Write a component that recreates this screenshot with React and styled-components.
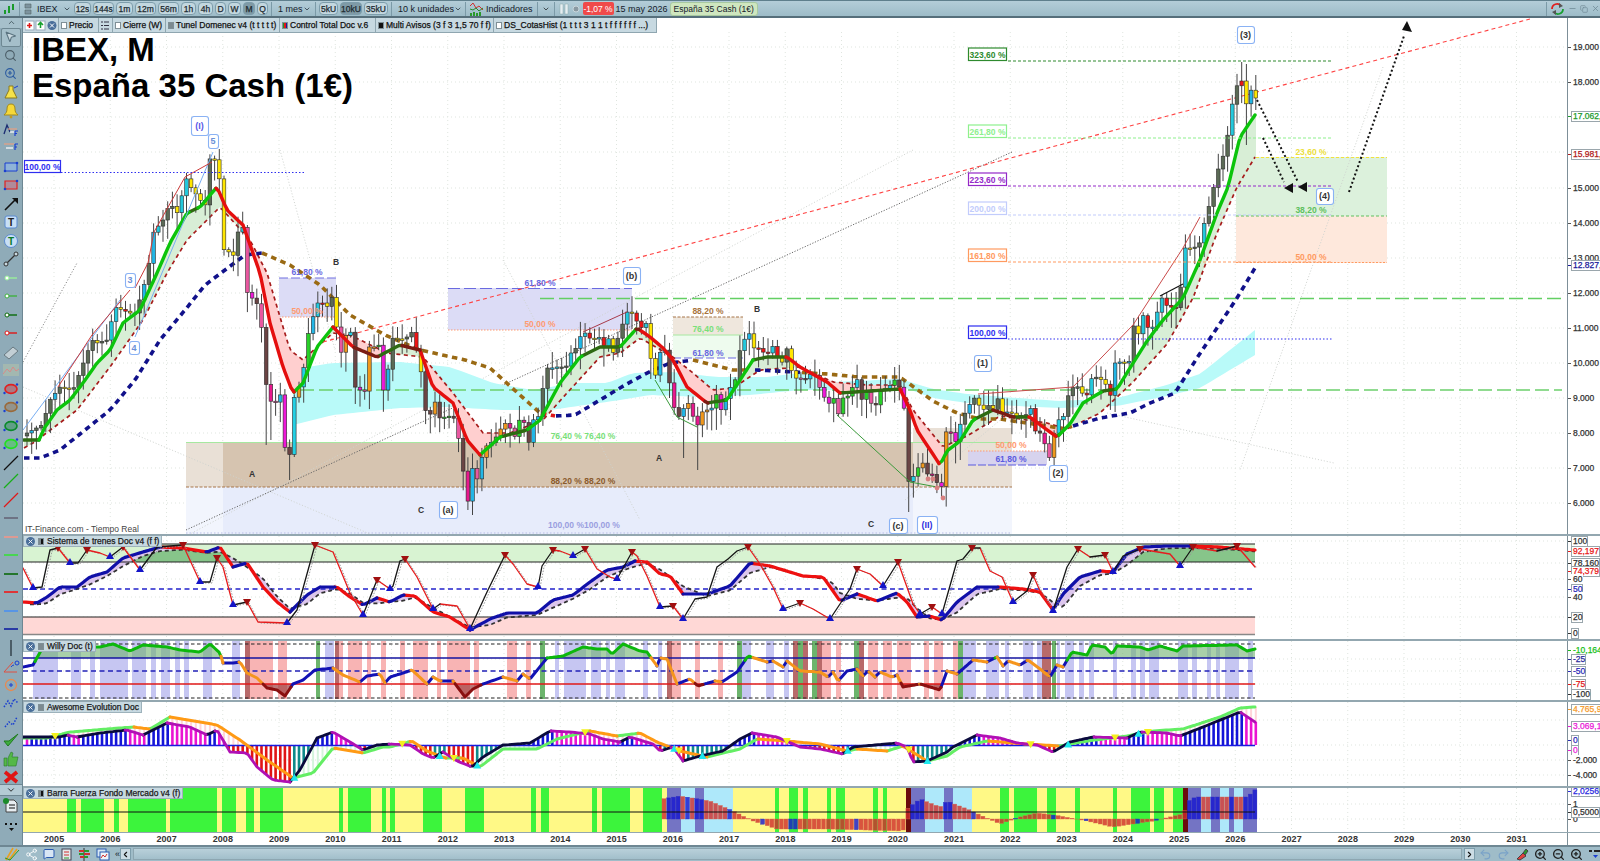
import React from 'react'
import styled, { createGlobalStyle } from 'styled-components'
import { MousePointer2, Search, ZoomIn, ZoomOut, Share2, MessageSquare, Undo2, Redo2, ChevronDown, ChevronUp, ChevronLeft, ChevronRight, Minus, X, Copy } from 'lucide-react'

const GlobalStyle = createGlobalStyle`
  html, body { margin: 0; padding: 0; background: #fff; }
  body { font-family: "Liberation Sans", Arial, sans-serif; }
`

// ---- data, read off the chart in page pixels (x, y) ----
const pairs = (a) => {
  const out = []
  for (let i = 0; i < a.length; i += 2) out.push([a[i], a[i + 1]])
  return out
}
const interp = (pts, x) => {
  if (x <= pts[0][0]) return pts[0][1]
  for (let i = 1; i < pts.length; i++) {
    if (x <= pts[i][0]) {
      const [x0, y0] = pts[i - 1]
      const [x1, y1] = pts[i]
      return y0 + ((y1 - y0) * (x - x0)) / (x1 - x0 || 1)
    }
  }
  return pts[pts.length - 1][1]
}
const rnd = (i) => {
  const s = Math.sin(i * 127.1 + 11.7) * 43758.5453
  return s - Math.floor(s)
}

const CLOSE = pairs([27,433,42,425,50,400,60,387,73,390,78,377,92,340,97,343,107,340,115,307,130,313,135,313,143,290,149,263,153,233,163,220,170,203,177,213,187,177,192,190,197,195,205,207,210,158,215,160,220,182,224,250,229,252,233,257,238,232,243,227,247,292,252,298,257,304,262,330,267,395,272,403,276,402,280,392,285,448,290,455,294,398,299,387,303,373,308,335,313,317,317,303,323,303,328,307,332,297,337,330,341,353,346,335,351,332,355,387,360,390,364,398,369,347,374,347,378,337,383,392,388,370,393,337,400,340,407,337,412,332,417,352,422,377,425,410,430,415,435,402,439,418,445,417,450,416,453,415,458,435,463,470,468,502,472,467,477,480,482,457,487,445,492,442,496,437,500,430,505,423,510,428,515,437,519,420,524,422,529,443,533,420,538,418,542,393,547,368,552,368,557,367,566,367,571,353,576,348,580,337,585,333,589,338,594,339,599,337,603,348,608,337,613,353,623,323,627,312,632,313,636,320,641,328,646,323,650,355,655,378,659,353,665,350,669,380,674,407,678,418,683,410,687,400,697,427,702,412,707,410,712,408,717,393,721,410,726,398,730,388,735,381,740,350,744,340,749,333,754,348,758,348,763,352,768,353,773,346,777,357,783,363,787,348,791,370,796,378,807,379,813,370,818,384,828,405,833,396,838,415,843,398,848,396,857,379,861,401,866,391,871,403,875,408,880,391,889,387,894,379,899,387,903,389,908,482,913,477,918,468,922,461,927,474,932,474,936,482,942,487,946,432,950,430,955,444,960,425,964,415,969,406,973,396,979,405,983,410,988,405,993,410,997,396,1002,413,1007,412,1011,412,1016,418,1020,415,1025,417,1030,405,1035,431,1039,431,1044,441,1049,460,1053,437,1058,420,1063,419,1067,398,1073,387,1077,386,1082,393,1087,395,1091,379,1096,377,1100,379,1105,382,1110,398,1115,363,1119,362,1124,362,1129,363,1133,324,1138,336,1143,315,1147,327,1152,329,1157,313,1162,298,1166,305,1171,307,1176,308,1181,286,1185,248,1193,248,1199,245,1204,224,1208,210,1213,190,1217,172,1222,160,1227,140,1231,110,1236,88,1241,77,1246,105,1251,90,1255,98])

const FAST = pairs([24,440,40,440,43,430,57,410,70,400,83,383,97,363,110,350,123,323,140,310,157,273,170,243,187,213,200,207,217,187,227,210,243,225,260,273,270,323,283,367,293,393,303,383,317,347,333,327,353,347,377,357,400,345,420,350,433,387,453,403,467,440,480,455,500,437,527,430,540,420,560,383,580,357,600,347,620,347,637,328,650,337,663,348,673,360,687,387,707,403,727,400,740,380,753,360,767,357,787,357,800,367,827,382,840,393,900,389,910,410,917,430,940,465,947,451,960,441,973,420,993,410,1013,417,1030,417,1043,427,1057,437,1070,424,1083,403,1103,391,1117,389,1130,368,1147,341,1163,320,1183,298,1200,260,1217,213,1228,187,1240,137,1255,115])
const SLOW = pairs([24,448,33,443,77,410,110,367,143,320,167,273,187,240,220,207,250,240,267,273,280,317,290,350,303,360,317,347,333,333,350,335,387,353,423,357,453,393,483,433,510,433,543,420,567,393,600,357,620,353,640,338,673,357,693,373,713,390,733,388,760,370,800,367,833,382,867,385,900,385,913,410,943,447,967,436,1000,416,1047,423,1067,429,1100,413,1133,382,1167,344,1193,298,1217,233,1237,187,1255,157])
const LONG = pairs([24,458,40,458,60,450,85,430,110,410,135,380,160,340,185,310,205,285,225,270,245,255,262,253,290,265,320,285,350,315,385,335,420,350,465,360,490,368,520,395,540,413,555,416,575,415,600,400,625,385,647,373,670,363,693,360,733,370,757,370,777,371,827,374,860,377,900,377,933,401,957,413,980,419,1000,419,1047,426,1065,429,1073,426,1100,418,1130,413,1150,403,1175,393,1197,358,1237,298,1255,268])
const CLOUD_TOP = pairs([293,372,307,367,333,363,400,362,450,367,493,383,533,390,573,383,607,383,633,373,673,372,717,377,767,377,800,373,833,382,900,379,933,389,967,394,1017,398,1060,401,1117,398,1167,385,1200,374,1255,330])
const CLOUD_BOTTOM = pairs([293,425,333,415,400,408,450,407,500,410,550,410,607,402,650,395,700,397,750,395,800,390,833,390,900,386,933,398,967,403,1017,406,1060,408,1117,406,1167,396,1200,388,1255,355])

const TRAIN_SLOW = pairs([23,602,37,603,47,597,60,587,77,587,90,577,107,572,123,558,143,552,160,547,183,548,207,552,220,547,233,567,247,563,263,587,277,602,290,612,307,595,320,587,337,587,350,597,363,605,377,598,390,602,403,595,415,596,433,612,450,617,470,630,490,619,507,613,537,613,553,600,573,595,590,582,607,570,623,567,635,561,647,562,660,574,670,576,683,594,707,594,730,586,750,563,770,566,803,576,823,577,833,591,840,601,857,594,877,601,897,593,907,602,917,617,930,616,942,620,957,602,977,587,1000,587,1023,589,1040,592,1053,610,1063,594,1080,577,1100,571,1113,572,1127,554,1143,547,1167,546,1190,546,1220,547,1255,550])
const TRAIN_FAST = pairs([23,568,33,588,42,587,50,550,58,548,70,563,78,563,87,550,100,553,110,557,123,547,140,570,157,547,183,545,200,582,210,582,217,558,223,567,233,605,247,602,258,622,287,623,297,610,315,545,333,552,350,593,363,615,377,580,390,589,393,586,400,561,405,559,417,577,433,609,440,604,457,606,470,629,487,592,505,555,513,564,527,584,538,587,542,566,553,550,560,551,573,556,585,549,597,569,610,577,617,579,632,552,637,556,647,576,660,607,673,606,683,619,695,599,707,597,717,567,728,559,737,551,748,547,760,564,773,587,783,609,800,603,813,609,830,619,850,589,857,569,870,574,883,586,898,562,913,604,920,614,932,607,942,614,957,561,963,559,972,548,980,548,990,571,1002,577,1013,602,1027,591,1033,575,1040,591,1053,611,1067,567,1078,549,1090,557,1105,555,1113,572,1123,556,1140,549,1170,554,1180,566,1193,547,1217,551,1237,546,1255,567])

const WILLY = pairs([23,667,33,665,43,647,100,647,113,644,130,651,143,645,167,647,180,650,200,652,210,644,220,653,223,663,233,663,240,662,247,673,257,678,267,688,277,690,285,696,293,684,303,680,315,670,333,668,343,675,360,682,367,676,380,674,385,683,390,677,400,674,412,670,427,684,433,677,440,681,453,681,465,697,473,689,483,684,503,677,517,681,523,674,530,679,547,658,563,656,583,647,597,649,607,649,612,654,623,644,640,651,647,652,657,666,660,658,667,659,677,684,690,679,698,686,715,681,722,682,737,672,748,656,767,662,773,661,783,667,787,661,800,671,820,672,828,677,833,672,838,681,847,671,857,669,863,676,868,671,875,677,880,672,892,677,897,675,903,687,920,684,940,690,947,671,957,674,973,660,987,662,997,657,1003,666,1008,661,1020,665,1028,660,1040,669,1050,677,1057,665,1063,667,1072,652,1087,655,1092,645,1105,647,1112,654,1117,646,1140,647,1148,650,1160,646,1177,651,1183,646,1237,645,1247,651,1255,649])
const WILLY_BANDS = [
  ['v',33,58],['v',71,81],['v',90,95],['v',100,128],['v',132,146],['v',151,156],['v',161,170],['v',175,180],['v',184,189],['v',203,212],['v',232,240],['d',245,250],['p',250,273],['p',278,287],['g',316,320],['v',325,334],['d',335,339],['p',339,343],['p',348,362],['p',367,371],['p',381,386],
  ['p',400,405],['p',413,428],['p',437,441],['p',447,470],['p',474,479],['p',507,517],['p',526,531],['g',540,545],['v',555,559],['v',564,586],['v',591,601],['v',606,610],['v',615,625],['v',643,648],['v',658,662],['d',667,672],['p',672,681],['p',695,700],['p',718,723],['g',737,742],['v',742,751],['v',766,774],['v',784,789],['d',793,798],['g',798,803],['d',803,808],['g',812,817],['d',817,822],['p',822,831],['p',836,841],['g',854,859],['d',859,864],['p',868,878],['p',883,892],['p',897,911],['p',924,929],['p',934,943],['p',953,958],['g',958,963],['v',963,976],['v',986,999],['v',1005,1009],['v',1023,1033],['v',1037,1042],['d',1042,1051],['g',1052,1056],['v',1057,1060],['v',1065,1074],['v',1079,1084],['v',1089,1094],['v',1113,1117],['v',1131,1136],['v',1140,1145],['v',1149,1159],['v',1178,1188],['v',1192,1197],['v',1207,1211],['v',1216,1220],['v',1225,1239],['v',1248,1253],
]
const BAND_COLORS = { v: '#c6c6f2', p: '#f8b4b4', d: '#b86a6a', g: '#6cb46c' }

const AWE_HIST = pairs([23,737,60,737,67,735,77,737,100,733,127,730,143,735,167,723,190,727,207,735,217,730,230,752,247,753,257,767,273,780,290,782,300,770,317,738,333,732,350,742,363,750,377,745,390,744,410,745,423,754,433,758,443,752,457,761,472,767,483,757,503,745,530,743,550,731,570,732,590,734,603,739,620,742,630,737,653,744,660,751,673,747,683,761,700,756,723,751,740,739,752,733,777,737,800,747,820,749,843,754,853,747,897,743,907,747,913,762,927,761,947,752,953,747,977,735,1000,738,1017,743,1037,745,1053,752,1070,742,1093,737,1127,738,1140,732,1167,733,1180,736,1203,727,1240,712,1255,722])
const AWE_SIGNAL = pairs([23,738,47,738,70,732,133,727,150,729,170,717,217,725,240,740,267,760,293,778,313,773,333,748,363,753,383,747,390,747,412,741,427,751,445,758,463,758,480,767,503,749,537,749,557,739,590,731,617,736,640,733,657,742,680,751,707,757,740,749,757,739,787,741,820,744,847,751,857,749,887,751,903,746,927,761,947,756,960,747,987,741,1027,744,1060,746,1087,741,1127,736,1153,731,1183,729,1220,717,1240,708,1255,707])

const BARRA_GREEN = [[67,76],[81,104],[114,119],[128,166],[170,217],[222,236],[246,254],[260,283],[339,343],[348,371],[382,386],[390,395],[423,442],[465,484],[531,536],[541,549],[592,597],[602,630],[643,662],[775,779],[789,798],[803,808],[827,831],[836,845],[873,878],[883,887],[1000,1009],[1014,1037],[1047,1056],[1075,1080],[1113,1117],[1131,1150],[1154,1164],[1173,1183]]
const BARRA_ZONES = [['#7474c4',667,681],['#aee8fa',681,695],['#7474c4',695,704],['#aee8fa',704,733],['#6b0c0c',906,911],['#7474c4',911,925],['#aee8fa',925,944],['#7474c4',944,953],['#aee8fa',953,972],['#6b0c0c',1183,1188],['#7474c4',1188,1201],['#aee8fa',1201,1211],['#7474c4',1211,1220],['#aee8fa',1220,1229],['#7474c4',1229,1234],['#aee8fa',1234,1243],['#7474c4',1243,1257]]
const BARRA_HIST = pairs([662,799,680,796,710,801,733,811,753,821,777,829,830,829,903,831,907,809,920,799,940,807,947,801,967,809,1000,824,1020,817,1037,813,1060,816,1087,821,1113,827,1153,821,1183,814,1190,799,1197,797,1247,797,1257,788])

const YEARS = []
for (let y = 2005; y <= 2031; y++) YEARS.push(y)
const yearX = (y) => 54 + (y - 2005) * 56.25
const monthly = (from, to) => {
  const xs = []
  for (let x = from; x <= to; x += 4.69) xs.push(x)
  return xs
}

// path helpers
const sample = (pts, from, to, step = 3) => {
  const out = []
  for (let x = from; x < to; x += step) out.push([x, interp(pts, x)])
  out.push([to, interp(pts, to)])
  return out
}
const toD = (pts) => pts.map((p, i) => `${i ? 'L' : 'M'}${p[0].toFixed(1)} ${p[1].toFixed(1)}`).join('')
// cut a curve in pieces coloured by its local state
const byColor = (pts, pick) => {
  const groups = {}
  for (let i = 1; i < pts.length; i++) {
    const c = pick(pts[i - 1], pts[i], i)
    const s = `M${pts[i - 1][0].toFixed(1)} ${pts[i - 1][1].toFixed(1)}L${pts[i][0].toFixed(1)} ${pts[i][1].toFixed(1)}`
    groups[c] = (groups[c] || '') + s
  }
  return Object.entries(groups)
}
const Colored = ({ pts, pick, width, cap = 'round' }) =>
  byColor(pts, pick).map(([c, d]) => <path key={c} d={d} stroke={c} strokeWidth={width} strokeLinecap={cap} fill="none" />)

const fillBetween = (a, b, from, to, test, step = 2) => {
  let d = ''
  for (let x = from; x < to; x += step) {
    const y0 = interp(a, x)
    const y1 = interp(b, x)
    if (!test(y0, y1)) continue
    const x1 = x + step
    d += `M${x} ${y0.toFixed(1)}L${x1} ${interp(a, x1).toFixed(1)}L${x1} ${interp(b, x1).toFixed(1)}L${x} ${y1.toFixed(1)}Z`
  }
  return d
}

const Tri = ({ x, y, up, color }) => (
  <polygon points={up ? `${x - 4},${y + 3} ${x + 4},${y + 3} ${x},${y - 4}` : `${x - 4},${y - 3} ${x + 4},${y - 3} ${x},${y + 4}`} fill={color} />
)

// ---- styled parts ----
const Page = styled.div`
  width: 1600px;
  height: 861px;
  display: flex;
  flex-direction: column;
  overflow: hidden;
  color: #111;
`
const Toolbar = styled.div`
  height: 18px;
  box-sizing: border-box;
  display: flex;
  align-items: center;
  gap: 2px;
  padding-left: 3px;
  background: linear-gradient(#b4cdd8, #9dbcc8);
  border-top: 1px solid #5f7f8c;
  border-bottom: 2px solid #566f7b;
  font-size: 9px;
  & > * {
    flex: none;
  }
`
const Sep = styled.i`
  width: 1px;
  height: 14px;
  margin: 0 ${(p) => p.$m || 1}px;
  background: #7b9aa7;
`
const ToolBtn = styled.div`
  width: ${(p) => p.$w}px;
  height: 13px;
  box-sizing: border-box;
  display: flex;
  align-items: center;
  justify-content: center;
  border: 1px solid #7d9dab;
  border-radius: 4px;
  font-size: 8.5px;
  -webkit-text-stroke: 0.25px #1d2a30;
  color: #1d2a30;
  background: ${(p) => (p.$on ? '#7f9aa6' : '#c3d7df')};
`
const SelectBtn = styled.div`
  width: ${(p) => p.$w}px;
  display: flex;
  align-items: center;
  justify-content: space-between;
  padding: 0 1px 0 3px;
  box-sizing: border-box;
  font-size: 9px;
  white-space: nowrap;
  color: #14202a;
  & > svg {
    flex: none;
  }
`
const ToolText = styled.span`
  font-size: 9px;
  color: #14202a;
  white-space: nowrap;
`
const Change = styled.span`
  width: 31px;
  height: 13px;
  background: #f04a4a;
  color: #fff;
  font-size: 8.5px;
  white-space: nowrap;
  display: flex;
  align-items: center;
  justify-content: center;
  border-radius: 2px;
`
const NameChip = styled.span`
  padding: 1px 3px;
  font-size: 8.5px;
  color: #14202a;
  background: #cfe6bf;
  border: 1px solid #a8c9a0;
  border-radius: 3px;
  white-space: nowrap;
`
const WinControls = styled.div`
  margin-left: auto;
  display: flex;
  align-items: center;
  gap: 3px;
  padding-left: 3px;
  border-left: 1px solid #7b9aa7;
  color: #6f8a96;
`
const Body = styled.div`
  flex: 1;
  display: flex;
  min-height: 0;
`
const Rail = styled.div`
  width: 23px;
  flex: none;
  display: flex;
  flex-direction: column;
  align-items: center;
  background: #8fabb8;
  border-right: 1px solid #6e8793;
  box-sizing: border-box;
  overflow: hidden;
`
const RailUp = styled.div`
  height: 10px;
  width: 100%;
  display: flex;
  justify-content: center;
  background: #a6c0cb;
  color: #33454e;
`
const RailItem = styled.div`
  height: 18.5px;
  flex: none;
  width: 20px;
  display: flex;
  align-items: center;
  justify-content: center;
  box-sizing: border-box;
  ${(p) => p.$on && 'background:#a5bfca;border:1px solid #6d8792;border-radius:2px;'}
`
const RailTools = styled.div`
  height: 756px;
  overflow: hidden;
  display: flex;
  flex-direction: column;
  align-items: center;
`
const RailFold = styled.div`
  width: 100%;
  height: 12px;
  flex: none;
  display: flex;
  justify-content: center;
  background: #b4cbd5;
  border-top: 1px solid #6e8793;
  border-bottom: 1px solid #6e8793;
  box-sizing: border-box;
`
const Charts = styled.div`
  flex: 1;
  min-width: 0;
  display: flex;
  flex-direction: column;
`
const Pane = styled.div`
  height: ${(p) => p.$h}px;
  flex: none;
  display: flex;
  position: relative;
  &::before {
    content: '';
    display: ${(p) => (p.$first ? 'none' : 'block')};
    position: absolute;
    left: 0;
    right: 0;
    top: 0;
    height: 2px;
    background: #93a7b0;
    z-index: 3;
  }
`
const Plot = styled.div`
  width: 1544px;
  height: 100%;
  position: relative;
  overflow: hidden;
  & > svg {
    display: block;
  }
`
const YAxis = styled.div`
  flex: 1;
  position: relative;
  overflow: hidden;
  border-left: 1px solid #7d8f98;
  background: #fff;
`
const Tick = styled.div`
  position: absolute;
  left: 0;
  top: ${(p) => p.$y}px;
  height: 11px;
  margin-top: -5px;
  display: flex;
  align-items: center;
  &::before {
    content: '';
    width: 3px;
    height: 1px;
    flex: none;
    background: ${(p) => p.$color || '#555'};
  }
`
const TickText = styled.span`
  padding: 0 0 0 1px;
  font-size: 8.5px;
  line-height: 9px;
  white-space: nowrap;
  -webkit-text-stroke: 0.25px ${(p) => p.$color || '#333'};
  color: ${(p) => p.$color || '#333'};
  background: #fff;
  border: ${(p) => (p.$box ? '1px solid #9aa6ac' : '1px solid transparent')};
`
const Title = styled.div`
  position: absolute;
  left: 9px;
  top: 14px;
  font-size: 33px;
  line-height: 36px;
  font-weight: 700;
  color: #000;
  white-space: nowrap;
  pointer-events: none;
`
const Legend = styled.div`
  position: absolute;
  left: 0;
  top: 0;
  height: 14px;
  display: flex;
  background: #c7d9e1;
  border-bottom: 1px solid #8fa6b0;
  font-size: 8.5px;
  -webkit-text-stroke: 0.25px #111;
  z-index: 2;
`
const LegendItem = styled.div`
  width: ${(p) => p.$w}px;
  box-sizing: border-box;
  display: flex;
  align-items: center;
  gap: 2px;
  padding-left: 2px;
  border-right: 1px solid #8fa6b0;
  white-space: nowrap;
  overflow: hidden;
`
const Swatch = styled.i`
  width: 6px;
  height: 7px;
  flex: none;
  background: ${(p) => p.$c || '#fff'};
  border: 1px solid #7f8f96;
  box-sizing: border-box;
`
const PaneTag = styled.div`
  position: absolute;
  left: 0;
  top: 1px;
  height: 12px;
  display: flex;
  align-items: center;
  gap: 3px;
  padding: 0 2px;
  background: #c7d9e1;
  border: 1px solid #9db2bb;
  box-sizing: border-box;
  font-size: 8.5px;
  -webkit-text-stroke: 0.25px #1a1a1a;
  color: #1a1a1a;
  white-space: nowrap;
  z-index: 2;
`
const CloseDot = styled.span`
  width: 9px;
  height: 9px;
  border-radius: 50%;
  background: #4a6f9a;
  color: #fff;
  display: inline-flex;
  align-items: center;
  justify-content: center;
`
const TimeAxis = styled.div`
  height: 13px;
  flex: none;
  display: flex;
  border-top: 1px solid #93a7b0;
  box-sizing: border-box;
`
const TimeRow = styled.div`
  width: 1544px;
  display: flex;
  padding-left: 3px;
  box-sizing: border-box;
`
const YearCell = styled.div`
  width: 56.25px;
  flex: none;
  text-align: center;
  font-size: 9px;
  font-weight: 700;
  color: #333;
  line-height: 13px;
`
const TimeCorner = styled.div`
  flex: 1;
  border-left: 1px solid #7d8f98;
`
const BottomBar = styled.div`
  height: 16px;
  flex: none;
  display: flex;
  align-items: center;
  background: #9fbcc8;
  border-top: 2px solid #6e8793;
  box-sizing: border-box;
  color: #33454e;
`
const BottomTools = styled.div`
  display: flex;
  align-items: center;
  gap: 5px;
  padding-left: ${(p) => p.$pad || 0}px;
`
const ScrollTrack = styled.div`
  flex: 1;
  height: 12px;
  margin: 0 2px;
  background: linear-gradient(#b9d0da, #a2bfcb);
  border: 1px solid #8da6b1;
  box-sizing: border-box;
`
const ScrollBtn = styled.div`
  width: 11px;
  height: 12px;
  display: flex;
  align-items: center;
  justify-content: center;
  background: #cbdce4;
  border: 1px solid #7d9dab;
  box-sizing: border-box;
  color: #111;
`

// ---- left rail drawings ----
const Ic = ({ children }) => (
  <svg width="18" height="16" viewBox="0 0 18 16">
    {children}
  </svg>
)
const ToolLine = ({ c }) => (
  <Ic>
    <path d="M3 8H15" stroke={c} strokeWidth="1.4" />
    <circle cx="5" cy="8" r="2" fill="#fff" stroke={c} />
  </Ic>
)
const ToolEllipse = ({ c }) => (
  <Ic>
    <ellipse cx="9" cy="8" rx="6" ry="4.4" fill={c} fillOpacity=".35" stroke={c} strokeWidth="1.6" />
    <circle cx="2.5" cy="12" r="1.2" fill="#1a3fd0" />
    <circle cx="15" cy="3.5" r="1.2" fill="#1a3fd0" />
  </Ic>
)
const ToolDiag = ({ c }) => (
  <Ic>
    <path d="M2 15L16 1" stroke={c} strokeWidth="1.3" />
  </Ic>
)
const RAIL = [
  <Ic key="a"><MousePointer2 size={13} x={2} y={1} color="#5a7380" fill="#c9d9e0" /></Ic>,
  <Ic key="b"><Search size={13} x={2} y={1} color="#4a5c66" /></Ic>,
  <Ic key="c"><ZoomIn size={13} x={2} y={1} color="#2a5aa0" /></Ic>,
  <Ic key="d"><path d="M7 1h4v4l4 8H3l4-8z" fill="#f6e24a" stroke="#8a7a20" /><path d="M12 3l4-2" stroke="#1a3fd0" /></Ic>,
  <Ic key="e"><path d="M9 1c3 0 4 2 4 5s1 4 3 6H2c2-2 3-3 3-6s1-5 4-5z" fill="#f6d838" stroke="#a08a20" /><circle cx="9" cy="14" r="1.4" fill="#c09a20" /></Ic>,
  <Ic key="f"><path d="M2 12L5 3l3 7" fill="none" stroke="#1a2a70" strokeWidth="1.3" /><path d="M6 7h9" stroke="#e8a080" strokeWidth="1.2" /><path d="M8 10h5" stroke="#fff" strokeWidth="1.2" /><path d="M13 9h3M13 9v5M13 11.5h2" stroke="#1a3fd0" strokeWidth="1.2" /></Ic>,
  <Ic key="g"><path d="M2 4h10" stroke="#e8a080" strokeWidth="1.2" /><path d="M4 8h7" stroke="#fff" strokeWidth="1.2" /><path d="M13 4h3M13 4v6M13 7h2" stroke="#1a3fd0" strokeWidth="1.2" /></Ic>,
  <Ic key="h"><path d="M3 4h12v8H3z" fill="#8fb3d8" stroke="#1a3fd0" /><circle cx="3" cy="12" r="1.3" fill="#1a3fd0" /><circle cx="15" cy="4" r="1.3" fill="#1a3fd0" /></Ic>,
  <Ic key="i"><path d="M3 4h12v8H3z" fill="#b08a9a" stroke="#e02020" strokeWidth="1.2" /><circle cx="3" cy="12" r="1.3" fill="#1a3fd0" /><circle cx="15" cy="4" r="1.3" fill="#1a3fd0" /></Ic>,
  <Ic key="j"><path d="M3 14L13 4" stroke="#111" strokeWidth="1.6" /><path d="M10 2h6v6z" fill="#111" /></Ic>,
  <Ic key="k"><rect x="3" y="2" width="12" height="12" rx="2" fill="#c8dff5" stroke="#5a8ad0" /><text x="9" y="12" fontSize="10" fontWeight="700" textAnchor="middle" fill="#222">T</text></Ic>,
  <Ic key="l"><circle cx="9" cy="8" r="6.5" fill="#c8dff5" stroke="#5a8ad0" /><text x="9" y="12" fontSize="10" fontWeight="700" textAnchor="middle" fill="#0a7a2a">T</text></Ic>,
  <Ic key="m"><path d="M4 13L14 3" stroke="#333" strokeWidth="1.3" /><circle cx="4" cy="13" r="2" fill="#c9d9e0" stroke="#333" /><circle cx="14" cy="3" r="2" fill="#c9d9e0" stroke="#333" /></Ic>,
  <ToolLine key="n" c="#9af09a" />,
  <ToolLine key="o" c="#3fb03f" />,
  <ToolLine key="p" c="#0a6a0a" />,
  <ToolLine key="q" c="#e01818" />,
  <Ic key="r"><path d="M2 11L11 3l5 4-9 8z" fill="#c2cfd5" stroke="#6a7a82" /></Ic>,
  <Ic key="s"><rect x="1" y="2" width="16" height="12" fill="#a3b8b0" /><path d="M1 12l4-5 3 3 3-5 3 4 3-2" fill="none" stroke="#d88a8a" /></Ic>,
  <ToolEllipse key="t" c="#e02020" />,
  <ToolEllipse key="u" c="#9a6a3a" />,
  <ToolEllipse key="v" c="#0a8a2a" />,
  <ToolEllipse key="w" c="#20e020" />,
  <ToolDiag key="x" c="#111" />,
  <ToolDiag key="y" c="#18b018" />,
  <ToolDiag key="z" c="#e01818" />,
  <Ic key="aa"><path d="M2 8H16" stroke="#667" strokeWidth="1.6" /></Ic>,
  <Ic key="ab"><path d="M2 8H16" stroke="#f0968a" strokeWidth="1.6" /></Ic>,
  <Ic key="ac"><path d="M2 8H16" stroke="#38e038" strokeWidth="1.6" /></Ic>,
  <Ic key="ad"><path d="M2 8H16" stroke="#0a6a0a" strokeWidth="1.6" /></Ic>,
  <Ic key="ae"><path d="M2 8H16" stroke="#f01818" strokeWidth="1.6" /></Ic>,
  <Ic key="af"><path d="M2 8H16" stroke="#4a90f0" strokeWidth="1.6" /></Ic>,
  <Ic key="ag"><path d="M2 8H16" stroke="#101fa0" strokeWidth="1.6" /></Ic>,
  <Ic key="ah"><path d="M9 0V16" stroke="#3a4a52" strokeWidth="1.6" /></Ic>,
  <Ic key="ai"><path d="M2 14L11 4M2 14H15" stroke="#e05040" fill="none" /><path d="M9 9a4 4 0 0 1 3-2" stroke="#1a3fd0" fill="none" /><circle cx="15" cy="5" r="2" fill="none" stroke="#1a3fd0" /></Ic>,
  <Ic key="aj"><circle cx="9" cy="8" r="5.5" fill="none" stroke="#e88a50" strokeWidth="1.3" /><path d="M9 6v4M7 8h4" stroke="#1a3fd0" /></Ic>,
  <Ic key="ak"><path d="M2 12l4-6 3 5 3-7 4 4" fill="none" stroke="#1a3fd0" strokeDasharray="1.5 1.5" strokeWidth="1.5" /></Ic>,
  <Ic key="al"><path d="M3 13l4-5 4 3 4-8" fill="none" stroke="#1a3fd0" strokeDasharray="1.5 1.5" strokeWidth="1.5" /></Ic>,
  <Ic key="am"><path d="M2 9l4 5L16 2l-9 7z" fill="#3fae3f" stroke="#1f7a1f" /></Ic>,
  <Ic key="an"><path d="M2 7h3v8H2zM6 7l3-6 2 1-1 4h6l-2 9H6z" fill="#54b848" stroke="#2a7a2a" strokeWidth=".6" /></Ic>,
  <Ic key="ao"><path d="M3 3L15 13M15 3L3 13" stroke="#e01414" strokeWidth="3.6" /></Ic>,
]

// ---- main chart ----
const FibTag = ({ y, label, c, dotted }) => (
  <g>
    <rect x="968.5" y={y - 13} width="38" height="12.5" fill="#fff" stroke={c} strokeWidth="1.2" />
    <Pct x={987.5} y={y - 3.5} fill={c}>{label}</Pct>
    <path d={`M1008 ${y}H1333`} stroke={c} strokeWidth="1.1" strokeDasharray={dotted ? '1.5 2' : '3 2'} />
  </g>
)
const Pct = ({ x, y, fill, children, size = 8.5 }) => (
  <text x={x} y={y} fill={fill} fontSize={size} fontWeight="700" textAnchor="middle" fontFamily="Liberation Sans, Arial, sans-serif">{children}</text>
)
const Wave = ({ x0, x1, y0, y1, label, color = '#333' }) => (
  <g>
    <rect x={x0 + 0.5} y={y0 + 0.5} width={x1 - x0} height={y1 - y0} rx="2.5" fill="#fff" stroke="#8ab2f4" strokeWidth="1.1" />
    <Pct x={(x0 + x1) / 2} y={(y0 + y1) / 2 + 3.3} fill={color} size={9}>{label}</Pct>
  </g>
)
const Letter = ({ x, y, children }) => <Pct x={x} y={y} fill="#333" size={8.5}>{children}</Pct>

const LONG_SPANS = [
  ['#11118a', 24, 262], ['#9a6a14', 262, 540], ['#e01818', 541, 555], ['#11118a', 556, 690], ['#9a6a14', 693, 750], ['#11118a', 755, 800], ['#9a6a14', 802, 1072], ['#11118a', 1073, 1255],
]
const fastColor = (a, b) => {
  const dy = (b[1] - a[1]) / (b[0] - a[0])
  if (dy < -0.55) return '#0cc40c'
  if (dy < 0.05) return '#2e6a12'
  if (dy < 0.5) return '#7a1c14'
  return '#e40f0f'
}
const bullColors = ['#5b6a55', '#22b6e6', '#5b6a55', '#5b6a55', '#24c8dc']
const bullDown = ['#ffe600', '#ee1515', '#ffe600']
const bearDown = ['#6b4444', '#6b4444', '#e8188e', '#e858a0', '#ee18d8']
const bearUp = ['#22d0e4', '#28d028', '#f0981c', '#22b6e6']
const LAST_CANDLES = ['#ee1515', '#ffe600', '#22b6e6', '#ffe600']
const LONG_WICKS = [[290, 480], [267, 445], [272, 440], [468, 510], [684, 458], [697, 470], [908, 512], [942, 498], [1166, 322]]

const Candles = () => {
  const xs = monthly(27, 1256)
  return xs.map((x, i) => {
    const close = interp(CLOSE, x)
    const open = i ? interp(CLOSE, xs[i - 1]) : close + 3
    const top = Math.min(open, close)
    const bottom = Math.max(open, close, top + 1.5)
    const up = close < open
    const bull = interp(FAST, x) < interp(SLOW, x)
    const k = Math.floor(rnd(i) * 97)
    const list = bull ? (up ? bullColors : bullDown) : up ? bearUp : bearDown
    let fill = list[k % list.length]
    if (i >= xs.length - 4) fill = LAST_CANDLES[i - xs.length + 4]
    let hi = top - 2 - rnd(i + 300) * 14
    let lo = bottom + 2 + rnd(i + 600) * 20
    const w = LONG_WICKS.find((p) => Math.abs(p[0] - x) < 2.4)
    if (w) lo = w[1]
    if (i === xs.length - 4) hi = 62
    if (i === xs.length - 3) { hi = 64; lo = 145 }
    if (i === xs.length - 1) { hi = 75; lo = 110 }
    return (
      <g key={i}>
        <path d={`M${x.toFixed(1)} ${hi.toFixed(1)}V${lo.toFixed(1)}`} stroke="#444" strokeWidth="1" />
        <rect x={(x - 1.8).toFixed(1)} y={top.toFixed(1)} width="3.6" height={(bottom - top).toFixed(1)} fill={fill} stroke="#2b2b2b" strokeWidth=".6" />
      </g>
    )
  })
}

const Grid = ({ top, bottom, ys }) => (
  <g stroke="#dfe5df" strokeWidth="1" strokeDasharray="1 3">
    {ys.map((y) => <path key={y} d={`M23 ${y}H1567`} />)}
    {YEARS.map((y) => <path key={y} d={`M${yearX(y)} ${top}V${bottom}`} />)}
  </g>
)

const MainChart = () => {
  const bull = fillBetween(FAST, SLOW, 24, 1255, (a, b) => a <= b)
  const bear = fillBetween(FAST, SLOW, 24, 1255, (a, b) => a > b)
  const cloud = [...sample(CLOUD_TOP, 293, 1255, 6), ...sample(CLOUD_BOTTOM, 293, 1255, 6).reverse()]
  const ys = [47, 82, 117, 152, 188, 223, 258, 293, 328, 363, 398, 433, 468, 503]
  return (
    <svg width="1544" height="516" viewBox="23 18 1544 516">
      <Grid top={32} bottom={534} ys={ys} />
      {/* retracement boxes */}
      <rect x="186" y="442" width="37" height="45" fill="#e9e0d6" />
      <rect x="223" y="442" width="690" height="45" fill="#d6c4b0" />
      <rect x="913" y="428" width="99" height="59" fill="#e9e0d6" />
      <rect x="186" y="487" width="37" height="47" fill="#f2f5fd" />
      <rect x="223" y="487" width="690" height="47" fill="#e7ecfb" />
      <rect x="913" y="487" width="99" height="47" fill="#f2f5fd" />
      <path d="M186 442.5H1012" stroke="#a6e8a0" strokeWidth="1.2" />
      <path d="M186 487H1012" stroke="#a8764a" strokeWidth="1.2" strokeDasharray="3 1.5" />
      <path d="M186 533H1012" stroke="#b9bfe6" strokeWidth="1" strokeDasharray="1.5 2" />
      <rect x="279" y="278" width="57" height="39" fill="#dcdcf6" />
      <path d="M279 278H336" stroke="#7070e0" strokeWidth="1.2" strokeDasharray="9 3" />
      <path d="M279 317H336" stroke="#ff9a70" strokeWidth="1" strokeDasharray="1.5 1.5" />
      <rect x="448" y="288" width="184" height="42" fill="#dcdcf6" />
      <path d="M448 288.5H632" stroke="#6a6ae0" strokeWidth="1.2" strokeDasharray="12 4" />
      <path d="M448 330H632" stroke="#ff9a70" strokeWidth="1" strokeDasharray="1.5 1.5" />
      <rect x="673" y="317" width="70" height="18" fill="#efe7dd" />
      <rect x="673" y="335" width="70" height="23" fill="#eefbee" />
      <path d="M673 317H743" stroke="#a8764a" strokeWidth="1.2" strokeDasharray="3 1.5" />
      <path d="M673 335H743" stroke="#a6e8a0" strokeWidth="1" />
      <path d="M673 358H743" stroke="#6a6ae0" strokeWidth="1.2" strokeDasharray="8 3" />
      <rect x="968" y="451" width="79" height="14" fill="#d7d3ee" />
      <path d="M968 465H1047" stroke="#5a5ae0" strokeWidth="1.2" strokeDasharray="8 2" />
      <path d="M968 451H1047" stroke="#ff9a70" strokeWidth="1" strokeDasharray="1.5 1.5" />
      <rect x="1236" y="157" width="151" height="59" fill="#dcf1dc" />
      <rect x="1236" y="216" width="151" height="47" fill="#fee8dc" />
      <path d="M1236 157.5H1387" stroke="#f2e23a" strokeWidth="1.1" strokeDasharray="3 2" />
      <path d="M1236 216H1387" stroke="#5ec05e" strokeWidth="1.1" strokeDasharray="3 2" />
      <path d="M1236 262.5H1387" stroke="#ff9a60" strokeWidth="1.1" strokeDasharray="2 1.5" />
      {/* faint trend lines */}
      <g stroke="#cfd3cf" strokeWidth="1" strokeDasharray="1 2" fill="none">
        <path d="M23 387L370 534" />
        <path d="M503 260L640 520" />
        <path d="M280 150L335 350" />
        <path d="M1107 413L1334 463" />
        <path d="M1383 67L1240 470" />
        <path d="M913 150L190 534" />
        <path d="M905 500L1030 395" />
      </g>
      <path d="M23 362L77 263" stroke="#777" strokeWidth="1" strokeDasharray="1 2" />
      <path d="M186 530L1012 152" stroke="#666" strokeWidth="1" strokeDasharray="1.2 1.6" />
      {/* cloud */}
      <path d={`${toD(cloud)}Z`} fill="#b9faf9" />
      {/* long horizontal supports */}
      <path d="M540 298.5H1562" stroke="#63cf63" strokeWidth="1.4" strokeDasharray="14 5" />
      <path d="M300 390H1562" stroke="#6ccf6c" strokeWidth="1.4" strokeDasharray="14 5" />
      {/* fast/slow ribbon */}
      <path d={bull} fill="#d8eed6" />
      <path d={bear} fill="#ffcfcf" />
      <path d={toD(sample(SLOW, 24, 1255))} stroke="#a61c1c" strokeWidth="1.7" strokeDasharray="4 3.5" fill="none" />
      {/* red dashed channel */}
      <path d="M323 342L1530 19" stroke="#ff4242" strokeWidth="1.1" strokeDasharray="4 3.2" />
      {/* long average */}
      {LONG_SPANS.map(([c, a, b]) => (
        <path key={a} d={toD(sample(LONG, a, b, 4))} stroke={c} strokeWidth="3.6" strokeDasharray="5.5 4.5" fill="none" />
      ))}
      <Candles />
      <Colored pts={sample(FAST, 24, 1255, 3)} pick={fastColor} width={3.4} />
      {/* wave joins */}
      <path d="M23 430L120 300M135 337L213 152" stroke="#78aef2" strokeWidth="1" fill="none" />
      <path d="M58 387L92 335L130 290M135 288L148 263L154 232L185 177L212 162" stroke="#cc3a3a" strokeWidth="1" fill="none" />
      <path d="M583 332L627 312" stroke="#a83a4a" strokeWidth="1" />
      <path d="M978 394L1073 387L1133 325L1183 248L1200 217" stroke="#c94a4a" strokeWidth="1" fill="none" />
      <path d="M655 380L677 417L697 427M837 415L910 482L937 487" stroke="#3a9a3a" strokeWidth="1" fill="none" />
      <path d="M1160 296L1183 284" stroke="#111" strokeWidth="1.2" />
      <g fill="#d88080">
        <circle cx="928" cy="479" r="2.4" /><circle cx="933" cy="479" r="2.4" /><circle cx="937" cy="488" r="2.4" /><circle cx="943" cy="498" r="2.4" />
      </g>
      {/* fib levels */}
      <FibTag y={61} label="323,60 %" c="#2e8a2e" />
      <FibTag y={138} label="261,80 %" c="#8ef08e" />
      <FibTag y={186} label="223,60 %" c="#9428c8" />
      <FibTag y={215} label="200,00 %" c="#c2ccfc" />
      <FibTag y={262} label="161,80 %" c="#ff9a60" />
      <FibTag y={339} label="100,00 %" c="#2e2ef0" dotted />
      <rect x="24.5" y="160.5" width="36" height="12" fill="#fff" stroke="#2e2ef0" strokeWidth="1.2" />
      <Pct x={42.5} y={170} fill="#2e2ef0">100,00 %</Pct>
      <path d="M61 172.5H306" stroke="#2e2ef0" strokeWidth="1" strokeDasharray="1.5 2" />
      <Pct x={307} y={275} fill="#6868e0">61,80 %</Pct>
      <Pct x={307} y={314} fill="#ff9a70">50,00 %</Pct>
      <Pct x={540} y={286} fill="#6868e0">61,80 %</Pct>
      <Pct x={540} y={327} fill="#ff9a70">50,00 %</Pct>
      <Pct x={708} y={314} fill="#a8743c">88,20 %</Pct>
      <Pct x={708} y={332} fill="#78e078">76,40 %</Pct>
      <Pct x={708} y={356} fill="#6868e0">61,80 %</Pct>
      <Pct x={1011} y={448} fill="#ff9a70">50,00 %</Pct>
      <Pct x={1011} y={462} fill="#5a5ae0">61,80 %</Pct>
      <Pct x={1311} y={155} fill="#ece03c">23,60 %</Pct>
      <Pct x={1311} y={213} fill="#5ec05e">38,20 %</Pct>
      <Pct x={1311} y={260} fill="#ff9a60">50,00 %</Pct>
      <Pct x={583} y={439} fill="#78e078">76,40 % 76,40 %</Pct>
      <Pct x={583} y={484} fill="#8a5a2c">88,20 % 88,20 %</Pct>
      <Pct x={584} y={528} fill="#9a9ee0">100,00 %100,00 %</Pct>
      {/* elliott labels */}
      <Wave x0={191} x1={208} y0={116} y1={135} label="(I)" color="#5a5ae8" />
      <Wave x0={208} x1={218} y0={134} y1={148} label="5" color="#6a90d8" />
      <Wave x0={125} x1={135} y0={273} y1={287} label="3" color="#6a90d8" />
      <Wave x0={129} x1={139} y0={341} y1={354} label="4" color="#6a90d8" />
      <Wave x0={623} x1={640} y0={267} y1={284} label="(b)" />
      <Wave x0={439} x1={457} y0={501} y1={518} label="(a)" />
      <Wave x0={1237} x1={1254} y0={26} y1={43} label="(3)" />
      <Wave x0={1316} x1={1333} y0={188} y1={204} label="(4)" />
      <Wave x0={974} x1={991} y0={355} y1={371} label="(1)" />
      <Wave x0={1049} x1={1067} y0={465} y1={481} label="(2)" />
      <Wave x0={889} x1={907} y0={518} y1={533} label="(c)" />
      <Wave x0={917} x1={937} y0={516} y1={533} label="(II)" color="#3030e0" />
      <Letter x={252} y={477}>A</Letter>
      <Letter x={336} y={265}>B</Letter>
      <Letter x={421} y={513}>C</Letter>
      <Letter x={659} y={461}>A</Letter>
      <Letter x={757} y={312}>B</Letter>
      <Letter x={871} y={527}>C</Letter>
      {/* forecast arrows */}
      <g stroke="#111" strokeWidth="2" strokeDasharray="2 2.4" fill="none">
        <path d="M1257 100L1298 182" />
        <path d="M1263 138L1284 182" />
        <path d="M1349 192L1404 36" />
      </g>
      <g fill="#111">
        <polygon points="1298,187 1307,182 1307,192" />
        <polygon points="1284,188 1293,183 1293,193" />
        <polygon points="1407,21 1412,32 1402,30" />
      </g>
      <text x="25" y="532" fontSize="8.5" fill="#444" fontFamily="Liberation Sans, Arial, sans-serif">IT-Finance.com - Tiempo Real</text>
    </svg>
  )
}

const TrainsChart = () => {
  const lag = TRAIN_SLOW.map(([x]) => [x, interp(TRAIN_SLOW, x - 7) + 2])
  const turns = []
  for (let i = 1; i < TRAIN_FAST.length - 1; i++) {
    const [x, y] = TRAIN_FAST[i]
    const p = TRAIN_FAST[i - 1][1]
    const n = TRAIN_FAST[i + 1][1]
    if (y < p && y <= n && p - y + n - y > 10) turns.push([x, y, false])
    if (y > p && y >= n && y - p + y - n > 10) turns.push([x, y, true])
  }
  const top = TRAIN_SLOW.map(([x]) => [x, 562])
  return (
    <svg width="1544" height="105" viewBox="23 534 1544 105">
      <Grid top={536} bottom={639} ys={[541, 563, 579, 597, 617]} />
      <rect x="23" y="544" width="1232" height="18" fill="#d8f3d2" />
      <rect x="23" y="617" width="1232" height="17" fill="#ffd8d6" />
      <path d={fillBetween(TRAIN_SLOW, top, 23, 1255, (a) => a < 562)} fill="#87c58a" />
      <path d={fillBetween(TRAIN_SLOW, lag, 23, 1255, () => true)} fill="#dcc6ec" />
      <path d="M23 544H1255M23 562H1255M23 617H1255" stroke="#222" strokeWidth="1.1" />
      <path d="M23 634.5H1255" stroke="#888" strokeWidth="1.6" />
      <path d="M23 589H1255" stroke="#2222cc" strokeWidth="1.6" strokeDasharray="5 3.5" />
      <path d={toD(sample(lag, 30, 1255))} stroke="#333" strokeWidth="1.8" strokeDasharray="4 3" fill="none" />
      <Colored pts={sample(TRAIN_SLOW, 23, 1255, 3)} pick={(a, b) => (b[1] <= a[1] ? '#1010a8' : '#ee1010')} width={3.2} />
      <path d={toD(TRAIN_FAST.map(([x, y]) => [x + 2, y + 1]))} stroke="#999" strokeWidth="1" strokeDasharray="1.5 1.5" fill="none" />
      <Colored pts={TRAIN_FAST} pick={(a, b) => (b[1] <= a[1] ? '#151515' : '#e61c1c')} width={1.3} />
      {turns.map(([x, y, up]) => (
        <Tri key={x} x={x} y={up ? y - 1 : y} up={up} color={up ? '#1414c8' : '#a01010'} />
      ))}
    </svg>
  )
}

const WillyChart = () => {
  const line = sample(WILLY, 23, 1255, 2)
  const green = WILLY.map(([x]) => [x, 658])
  const red = WILLY.map(([x]) => [x, 684])
  return (
    <svg width="1544" height="61" viewBox="23 639 1544 61">
      <Grid top={641} bottom={700} ys={[659, 671, 684]} />
      {WILLY_BANDS.map(([k, a, b]) => (
        <rect key={a} x={a} y="641" width={b - a} height="58" fill={BAND_COLORS[k]} />
      ))}
      <path d={fillBetween(WILLY, green, 23, 1255, (a) => a < 658)} fill="#6fb06f" fillOpacity=".6" />
      <path d={fillBetween(WILLY, red, 23, 1255, (a) => a > 684)} fill="#a04040" fillOpacity=".7" />
      <path d="M23 644H1255M23 698H1255" stroke="#222" strokeWidth="1" strokeDasharray="3.5 2.5" />
      <path d="M23 658H1255" stroke="#1515a0" strokeWidth="1.3" />
      <path d="M23 671H1255" stroke="#2222b8" strokeWidth="1.5" strokeDasharray="5 3.5" />
      <path d="M23 684H1255" stroke="#e01818" strokeWidth="1.3" />
      <Colored
        pts={line}
        pick={(a, b) => {
          if (b[1] < 658) return '#0cb80c'
          if (b[1] > 684.5) return '#8a1010'
          return b[1] <= a[1] ? '#1212b4' : '#f5951c'
        }}
        width={3}
      />
    </svg>
  )
}

const AwesomeChart = () => {
  const xs = monthly(27, 1256)
  const marks = []
  for (let i = 1; i < xs.length; i++) {
    const a = interp(AWE_HIST, xs[i - 1]) - interp(AWE_SIGNAL, xs[i - 1])
    const b = interp(AWE_HIST, xs[i]) - interp(AWE_SIGNAL, xs[i])
    if (a * b < 0) marks.push([xs[i], interp(AWE_SIGNAL, xs[i]), b < 0])
  }
  return (
    <svg width="1544" height="86" viewBox="23 700 1544 86">
      <Grid top={702} bottom={786} ys={[720, 745, 760, 775]} />
      {xs.map((x, i) => {
        const h = interp(AWE_HIST, x)
        const s = interp(AWE_SIGNAL, x)
        const rising = i > 0 && h <= interp(AWE_HIST, xs[i - 1])
        const c = h < 745 ? (rising ? '#1414d8' : '#ea14d2') : rising ? '#0f8a8a' : '#e01414'
        return (
          <g key={x}>
            <path d={`M${x.toFixed(1)} ${s.toFixed(1)}V${h.toFixed(1)}`} stroke={s < h ? '#ffd4d8' : '#d4f4dc'} strokeWidth="2" />
            <path d={`M${x.toFixed(1)} 745V${h.toFixed(1)}`} stroke={c} strokeWidth="2.6" />
          </g>
        )
      })}
      <path d="M23 745.5H1255" stroke="#1a1ae0" strokeWidth="1.4" />
      <Colored pts={sample(AWE_SIGNAL, 23, 1255, 3)} pick={(a, b) => (b[1] > a[1] + 0.02 ? '#ff9a14' : '#64ee64')} width={3} />
      <Colored pts={sample(AWE_HIST, 23, 1255, 3)} pick={(a, b) => (b[1] <= a[1] ? '#0a0a3c' : '#b010b4')} width={2.8} />
      {marks.map(([x, y, up]) => (
        <Tri key={x} x={x} y={y} up={up} color={up ? '#1ee8ee' : '#f4f01e'} />
      ))}
    </svg>
  )
}

const BarraChart = () => {
  const xs = monthly(664, 1256)
  return (
    <svg width="1544" height="46" viewBox="23 786 1544 46">
      <Grid top={788} bottom={832} ys={[804, 819]} />
      <rect x="23" y="788" width="1232" height="44" fill="#fff986" />
      {BARRA_GREEN.map(([a, b]) => <rect key={a} x={a} y="788" width={b - a} height="44" fill="#3cf43c" />)}
      {BARRA_ZONES.map(([c, a, b]) => <rect key={a} x={a} y="788" width={b - a} height="44" fill={c} />)}
      {xs.map((x, i) => {
        const y = interp(BARRA_HIST, x)
        const zone = BARRA_ZONES.find(([, a, b]) => x >= a && x < b)
        const blue = (zone && zone[0] === '#7474c4') || rnd(i + 40) < 0.12
        return (
          <rect key={x} x={(x - 2).toFixed(1)} y={Math.min(y, 819).toFixed(1)} width="4" height={Math.abs(y - 819).toFixed(1)} fill={blue ? '#1414d0' : '#d02a2a'} fillOpacity=".8" stroke={blue ? '#3030c0' : '#d86a50'} strokeWidth=".4" />
        )
      })}
      <path d="M23 812H1255" stroke="#111" strokeWidth="1.1" />
    </svg>
  )
}

const MAIN_TICKS = [
  [29, '19.000'], [64, '18.000'], [98, '17.062,', '#1c9a2c', 1], [136, '15.981,', '#b02020', 1], [170, '15.000'], [205, '14.000'], [240, '13.000'], [247, '12.827,', '#1a1a9a', 1], [275, '12.000'], [310, '11.000'], [345, '10.000'], [380, '9.000'], [415, '8.000'], [450, '7.000'], [485, '6.000'],
]
const TRAIN_TICKS = [[7, '100', '#333', 1], [17, '92,197', '#e81818', 1], [29, '78,160', '#333', 1], [37, '74,379', '#e81818', 1], [45, '60'], [55, '50', '#2a2ab8', 1], [63, '40'], [83, '20', '#333', 1], [99, '0', '#333', 1]]
const WILLY_TICKS = [[11, '-10,164', '#18c018'], [20, '-25', '#2a2a9a', 1], [32, '-50', '#2a2ab8', 1], [45, '-75', '#e01818', 1], [55, '-100', '#333', 1]]
const AWE_TICKS = [[9, '4.765,9', '#f59a2a', 1], [26, '3.069,1', '#ea18d8', 1], [40, '0', '#2a2ab8', 1], [50, '0', '#ea18d8', 1], [60, '-2.000'], [75, '-4.000']]
const BARRA_TICKS = [[5, '2,0256', '#2a2ae0', 1], [18, '1'], [33, '0'], [26, '0,5000', '#333', 1]]

const Ticks = ({ items }) =>
  items.map(([y, t, c, box]) => (
    <Tick key={t + y} $y={y} $color={c}>
      <TickText $color={c} $box={box}>{t}</TickText>
    </Tick>
  ))

const Tag = ({ name, c }) => (
  <PaneTag>
    <CloseDot><X size={7} strokeWidth={3} /></CloseDot>
    <Swatch $c={c} />
    {name}
  </PaneTag>
)

export default function App() {
  return (
    <Page>
      <GlobalStyle />
      <Toolbar>
        <svg width="12" height="12" viewBox="0 0 12 12"><path d="M2 7v4M6 3v7M10 1v6" stroke="#1a9a2a" strokeWidth="2" /></svg>
        <Sep $m={2} />
        <svg width="8" height="12" viewBox="0 0 8 12"><path d="M1 1h6v4H1zM1 7h6v4H1z" fill="#7c939e" stroke="#566" strokeWidth=".6" /></svg>
        <SelectBtn $w={38}>IBEX <ChevronDown size={8} /></SelectBtn>
        <ToolBtn $w={17}>12s</ToolBtn>
        <ToolBtn $w={21}>144s</ToolBtn>
        <ToolBtn $w={17}>1m</ToolBtn>
        <ToolBtn $w={21}>12m</ToolBtn>
        <ToolBtn $w={21}>56m</ToolBtn>
        <ToolBtn $w={15}>1h</ToolBtn>
        <ToolBtn $w={15}>4h</ToolBtn>
        <ToolBtn $w={11}>D</ToolBtn>
        <ToolBtn $w={13}>W</ToolBtn>
        <ToolBtn $w={12} $on>M</ToolBtn>
        <ToolBtn $w={11}>Q</ToolBtn>
        <Sep />
        <SelectBtn $w={37}>1 mes <ChevronDown size={8} /></SelectBtn>
        <Sep />
        <ToolBtn $w={19}>5kU</ToolBtn>
        <ToolBtn $w={22} $on>10kU</ToolBtn>
        <ToolBtn $w={24}>35kU</ToolBtn>
        <Sep />
        <SelectBtn $w={67}>10 k unidades <ChevronDown size={8} /></SelectBtn>
        <Sep />
        <svg width="15" height="15" viewBox="0 0 15 15">
          <path d="M1 5l3-3 3 5 3-2 4 4" stroke="#d03030" fill="none" />
          <path d="M1 8l3 1 3-2 3 3 4-3" stroke="#2a8a2a" fill="none" />
          <path d="M2 12v3M5 11v4M8 12v3M11 11v4" stroke="#2a9a2a" strokeWidth="2" />
        </svg>
        <ToolText>Indicadores</ToolText>
        <Sep $m={2} />
        <ChevronDown size={8} />
        <Sep $m={2} />
        <svg width="10" height="12" viewBox="0 0 10 12"><path d="M1 1h3v10H1zM6 1h3v10H6z" fill="#e6eef2" stroke="#8aa" strokeWidth=".5" /></svg>
        <svg width="10" height="10" viewBox="0 0 10 10"><circle cx="5" cy="5" r="3" fill="#8a9aa2" stroke="#c8d6dc" /></svg>
        <Change>-1,07 %</Change>
        <ToolText>15 may 2026</ToolText>
        <NameChip>España 35 Cash (1€)</NameChip>
        <WinControls>
          <svg width="15" height="14" viewBox="0 0 15 14">
            <path d="M2 7a5 5 0 0 1 9-3" fill="none" stroke="#e02020" strokeWidth="1.8" />
            <path d="M13 7a5 5 0 0 1-9 3" fill="none" stroke="#18a030" strokeWidth="1.8" />
            <path d="M9 1l4 3-4 2zM6 13l-4-3 4-2z" fill="#555" />
          </svg>
          <Minus size={9} /><Copy size={8} /><X size={9} />
        </WinControls>
      </Toolbar>
      <Body>
        <Rail>
          <RailUp><ChevronUp size={9} /></RailUp>
          <RailTools>
            {RAIL.map((icon, i) => <RailItem key={i} $on={i === 0}>{icon}</RailItem>)}
          </RailTools>
          <RailFold><ChevronDown size={10} /></RailFold>
          <RailItem>
            <Ic><path d="M4 3h8l3 3v9H4z" fill="#e8eef2" stroke="#444" /><circle cx="4" cy="4" r="3" fill="#1a8a2a" /><path d="M7 8h6M7 11h6" stroke="#111" /></Ic>
          </RailItem>
          <RailItem>
            <Ic><path d="M3 8h2M8 8h2M13 8h2" stroke="#111" strokeWidth="2" /><path d="M7 12h5l-2.5 3z" fill="#111" /></Ic>
          </RailItem>
        </Rail>
        <Charts>
          <Pane $h={516} $first>
            <Plot>
              <MainChart />
              <Title>IBEX, M<br />España 35 Cash (1€)</Title>
              <Legend>
                <LegendItem $w={36}>
                  <svg width="32" height="11" viewBox="0 0 32 11">
                    <rect x="0" y="1" width="9" height="9" fill="#fff" stroke="#9ab" />
                    <path d="M2 5.5h5M4.5 3v5" stroke="#e01818" strokeWidth="1.6" />
                    <rect x="11" y="1" width="9" height="9" fill="#fff" stroke="#9ab" />
                    <path d="M15.5 8V3M13 5l2.5-2.5L18 5" stroke="#18a030" fill="none" strokeWidth="1.6" />
                    <circle cx="27" cy="5.5" r="4.5" fill="#4a6f9a" />
                    <path d="M25 3.5l4 4M29 3.5l-4 4" stroke="#fff" />
                  </svg>
                </LegendItem>
                <LegendItem $w={40}><Swatch />Precio</LegendItem>
                <LegendItem $w={14}>
                  <svg width="8" height="9" viewBox="0 0 8 9"><path d="M0 1h2M3 1h5M0 4.5h2M3 4.5h5M0 8h2M3 8h5" stroke="#334" /></svg>
                </LegendItem>
                <LegendItem $w={53}><Swatch />Cierre (W)</LegendItem>
                <LegendItem $w={114}><Swatch $c="#7c8a90" />Tunel Domenec v4 (t t t t t)</LegendItem>
                <LegendItem $w={96}><Swatch $c="linear-gradient(90deg,#1a9a2a 33%,#e01818 33% 66%,#1a1aa0 66%)" />Control Total Doc v.6</LegendItem>
                <LegendItem $w={118}><Swatch $c="#111" />Multi Avisos (3 f 3 1,5 70 f f)</LegendItem>
                <LegendItem $w={163}><Swatch />DS_CotasHist (1 t t t 3 1 1 t f f f f f f ...)</LegendItem>
              </Legend>
            </Plot>
            <YAxis><Ticks items={MAIN_TICKS} /></YAxis>
          </Pane>
          <Pane $h={105}>
            <Plot>
              <TrainsChart />
              <Tag name="Sistema de trenes Doc v4 (f f)" c="linear-gradient(90deg,#7c8a90 50%,#111 50%)" />
            </Plot>
            <YAxis><Ticks items={TRAIN_TICKS} /></YAxis>
          </Pane>
          <Pane $h={61}>
            <Plot>
              <WillyChart />
              <Tag name="Willy Doc (t)" c="#7c8a90" />
            </Plot>
            <YAxis><Ticks items={WILLY_TICKS} /></YAxis>
          </Pane>
          <Pane $h={86}>
            <Plot>
              <AwesomeChart />
              <Tag name="Awesome Evolution Doc" c="#7c8a90" />
            </Plot>
            <YAxis><Ticks items={AWE_TICKS} /></YAxis>
          </Pane>
          <Pane $h={46}>
            <Plot>
              <BarraChart />
              <Tag name="Barra Fuerza Fondo Mercado v4 (f)" c="linear-gradient(90deg,#7c8a90 50%,#111 50%)" />
            </Plot>
            <YAxis><Ticks items={BARRA_TICKS} /></YAxis>
          </Pane>
          <TimeAxis>
            <TimeRow>
              {YEARS.map((y) => <YearCell key={y}>{y}</YearCell>)}
            </TimeRow>
            <TimeCorner />
          </TimeAxis>
        </Charts>
      </Body>
      <BottomBar>
        <BottomTools $pad={4}>
          <svg width="16" height="14" viewBox="0 0 16 14"><path d="M2 13L9 1M5 13l8-11" stroke="#e8a020" strokeWidth="1.6" /><path d="M1 11l5 2 9-10" stroke="#2a9a2a" fill="none" /></svg>
          <Share2 size={13} color="#fff" strokeWidth={1.6} />
          <MessageSquare size={12} color="#2a5ab0" fill="#d8e6f4" />
          <svg width="13" height="13" viewBox="0 0 13 13"><rect x="2" y="1" width="9" height="11" fill="#e4e8ea" stroke="#445" /><path d="M4 4h5M4 7h5" stroke="#d03030" /><path d="M4 10h5" stroke="#2a9a2a" /></svg>
          <svg width="13" height="13" viewBox="0 0 13 13"><path d="M6 0v13" stroke="#333" /><path d="M1 2h5v2H1zM6 5h6v2H6zM2 8h4v2H2z" fill="#d03030" /><path d="M6 2h5v2H6zM1 5h5v2H1zM6 8h4v2H6z" fill="#2a9a2a" /></svg>
          <svg width="14" height="13" viewBox="0 0 14 13"><rect x="1" y="1" width="9" height="8" fill="#d8e8f6" stroke="#2a5ab0" /><rect x="4" y="4" width="9" height="8" fill="#eef4fa" stroke="#2a5ab0" /><path d="M5 10l2-3 2 2 2-3" stroke="#d03030" fill="none" /></svg>
          <ToolText>«</ToolText>
        </BottomTools>
        <ScrollBtn><ChevronLeft size={9} strokeWidth={3} /></ScrollBtn>
        <ScrollTrack />
        <ScrollBtn><ChevronRight size={9} strokeWidth={3} /></ScrollBtn>
        <BottomTools $pad={4}>
          <Undo2 size={13} color="#7aa2c8" />
          <Redo2 size={13} color="#7aa2c8" />
          <svg width="14" height="14" viewBox="0 0 14 14"><path d="M2 12l6-6 3 3-6 4z" fill="#e04040" stroke="#444" /><path d="M8 6l3-4 2 2-3 4z" fill="#2a9a2a" stroke="#444" /></svg>
          <ZoomIn size={13} color="#222" strokeWidth={2.4} />
          <ZoomOut size={13} color="#222" strokeWidth={2.4} />
          <ZoomIn size={13} color="#222" strokeWidth={2.4} />
          <svg width="12" height="13" viewBox="0 0 12 13"><path d="M1 3h3M6 3h3M9 3h3" stroke="#222" strokeWidth="2" /><path d="M5 7h5l-2.5 3z" fill="#1a3fd0" /></svg>
        </BottomTools>
      </BottomBar>
    </Page>
  )
}
